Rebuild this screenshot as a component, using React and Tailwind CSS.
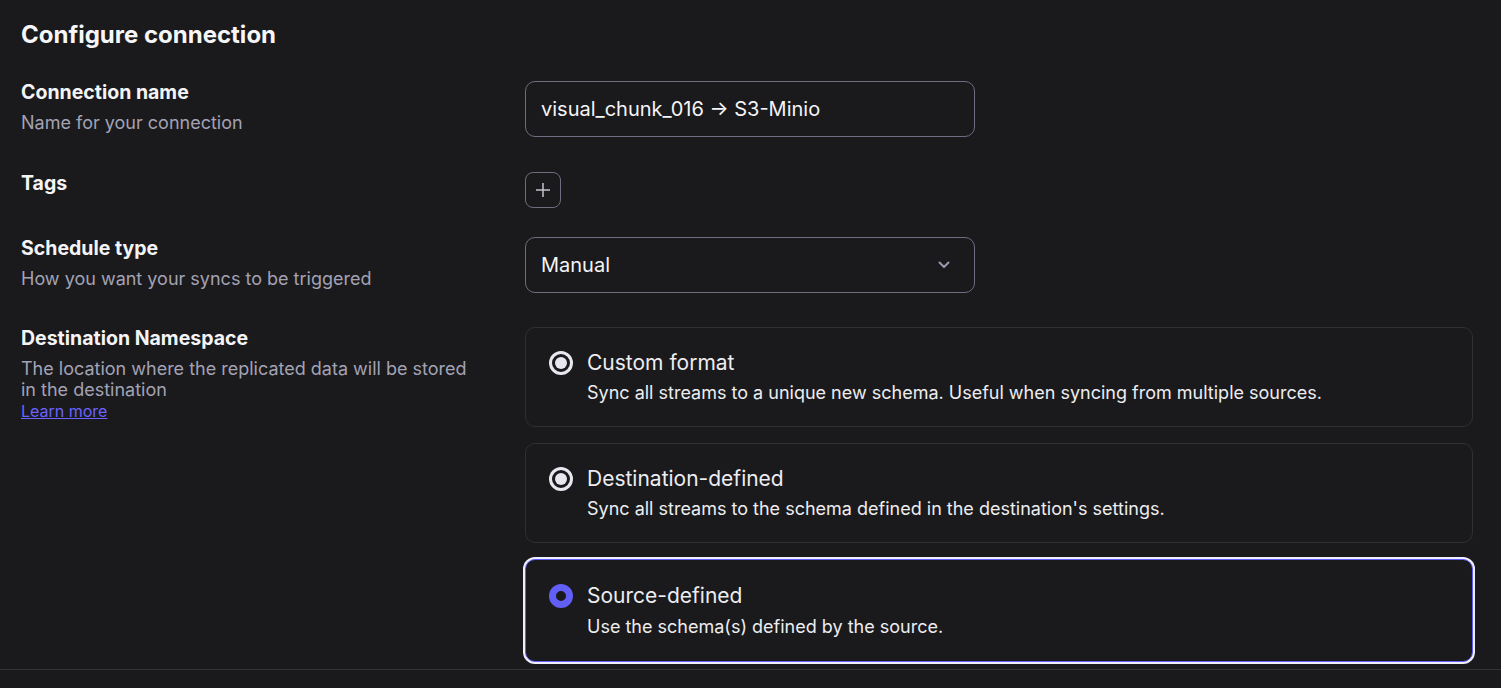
import React, { useState } from 'react';

const options = [
  {
    id: 'custom',
    title: 'Custom format',
    desc: 'Sync all streams to a unique new schema. Useful when syncing from multiple sources.',
  },
  {
    id: 'destination',
    title: 'Destination-defined',
    desc: "Sync all streams to the schema defined in the destination's settings.",
  },
  {
    id: 'source',
    title: 'Source-defined',
    desc: 'Use the schema(s) defined by the source.',
  },
];

function Radio({ selected }) {
  if (selected) {
    return <span className="block w-[24px] h-[24px] rounded-full border-[7px] border-[#625ff7] bg-[#1a1a1c]" />;
  }
  return (
    <span className="flex items-center justify-center w-[24px] h-[24px] rounded-full border-[3px] border-[#e8e6ef] bg-[#1a1a1c]">
      <span className="block w-[12px] h-[12px] rounded-full bg-[#e8e6ef]" />
    </span>
  );
}

function FieldLabel({ title, children }) {
  return (
    <div className="-mt-[1px]">
      <div className="text-[19.5px] leading-[24px] font-bold text-[#f4f4f6]">{title}</div>
      {children && <div className="mt-[8px] text-[18px] leading-[21px] text-[#a3a2b4] max-w-[455px]">{children}</div>}
    </div>
  );
}

export default function App() {
  const [namespace, setNamespace] = useState('source');

  return (
    <div className="h-[688px] flex flex-col bg-[#1a1a1c] overflow-hidden" style={{ fontFamily: 'Inter, "Noto Sans", sans-serif' }}>
      <div className="h-[669px] overflow-hidden pl-[21px] pr-[28px] pt-[20px]">
        <h1 className="text-[24px] leading-[30px] font-bold text-[#f6f6f8]">Configure connection</h1>

        <div className="grid grid-cols-[504px_1fr] mt-[31px]">
          <FieldLabel title="Connection name">Name for your connection</FieldLabel>
          <div className="w-[450px] h-[56px] flex items-center px-[15px] rounded-[10px] border border-[#6e6c80] text-[20px] text-[#f4f4f6]">
            visual_chunk_016 → S3-Minio
          </div>
        </div>

        <div className="grid grid-cols-[504px_1fr] mt-[35px]">
          <FieldLabel title="Tags" />
          <button className="w-[36px] h-[36px] flex items-center justify-center rounded-[8px] border border-[#6e6c80]">
            <svg width="16" height="16" viewBox="0 0 16 16" fill="none" stroke="#c2c1ce" strokeWidth="1.5">
              <path d="M8 1v14M1 8h14" />
            </svg>
          </button>
        </div>

        <div className="grid grid-cols-[504px_1fr] mt-[29px]">
          <FieldLabel title="Schedule type">How you want your syncs to be triggered</FieldLabel>
          <div className="w-[450px] h-[56px] flex items-center justify-between pl-[15px] pr-[24px] rounded-[10px] border border-[#6e6c80] text-[20px] text-[#f4f4f6]">
            <span>Manual</span>
            <svg width="12" height="8" viewBox="0 0 12 8" fill="none" stroke="#9a98ac" strokeWidth="2" strokeLinecap="round" strokeLinejoin="round">
              <path d="M1.5 1.5 6 6l4.5-4.5" />
            </svg>
          </div>
        </div>

        <div className="grid grid-cols-[504px_1fr] mt-[34px]">
          <FieldLabel title="Destination Namespace">
            The location where the replicated data will be stored in the destination
            <br />
            <a href="#" className="text-[16px] text-[#6b63ff] underline">Learn more</a>
          </FieldLabel>
          <div className="flex flex-col gap-[16px]">
            {options.map((o) => {
              const selected = namespace === o.id;
              return (
                <button
                  key={o.id}
                  onClick={() => setNamespace(o.id)}
                  className={
                    selected
                      ? 'flex items-start gap-[14px] text-left pl-[23px] pr-[20px] pt-[22px] pb-[22px] rounded-[10px] border border-[#625ff7] ring-2 ring-[#f0efff] bg-[#1a1a1c]'
                      : 'flex items-start gap-[14px] text-left pl-[23px] pr-[20px] pt-[21px] pb-[21px] rounded-[10px] border border-[#2f2f35] bg-[#1a1a1c]'
                  }
                >
                  <span className="mt-[2px]">
                    <Radio selected={selected} />
                  </span>
                  <span className="flex flex-col">
                    <span className="text-[21px] leading-[28px] text-[#ededf1]">{o.title}</span>
                    <span className={selected ? 'mt-[5px] text-[18px] leading-[24px] text-[#ededf1]' : 'mt-[4px] text-[18px] leading-[24px] text-[#ededf1]'}>{o.desc}</span>
                  </span>
                </button>
              );
            })}
          </div>
        </div>
      </div>
      <div className="flex-1 border-t border-[#333337]" />
    </div>
  );
}
